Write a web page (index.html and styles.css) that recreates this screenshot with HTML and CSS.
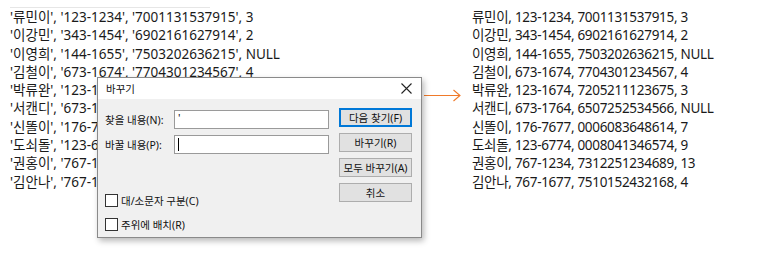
FILE: index.html
```html
<!DOCTYPE html>
<html lang="ko">
<head>
<meta charset="utf-8">
<link rel="stylesheet" href="styles.css">
</head>
<body>
<div class="page">
  <div class="left">
    <div class="rule"></div>
    <div class="lines">
      <div>'류민이', '123-1234', '7001131537915', 3</div>
      <div>'이강민', '343-1454', '6902161627914', 2</div>
      <div>'이영희', '144-1655', '7503202636215', NULL</div>
      <div>'김철이', '673-1674', '7704301234567', 4</div>
      <div>'박류완', '123-1674', '7205211123675', 3</div>
      <div>'서캔디', '673-1764', '6507252534566', NULL</div>
      <div>'신똘이', '176-7677', '0006083648614', 7</div>
      <div>'도쇠돌', '123-6774', '0008041346574', 9</div>
      <div>'권홍이', '767-1234', '7312251234689', 13</div>
      <div>'김안나', '767-1677', '7510152432168', 4</div>
    </div>
  </div>
  <div class="right lines">
    <div>류민이, 123-1234, 7001131537915, 3</div>
    <div>이강민, 343-1454, 6902161627914, 2</div>
    <div>이영희, 144-1655, 7503202636215, NULL</div>
    <div>김철이, 673-1674, 7704301234567, 4</div>
    <div>박류완, 123-1674, 7205211123675, 3</div>
    <div>서캔디, 673-1764, 6507252534566, NULL</div>
    <div>신똘이, 176-7677, 0006083648614, 7</div>
    <div>도쇠돌, 123-6774, 0008041346574, 9</div>
    <div>권홍이, 767-1234, 7312251234689, 13</div>
    <div>김안나, 767-1677, 7510152432168, 4</div>
  </div>

  <svg class="arrow" width="40" height="14" viewBox="0 0 40 14">
    <path d="M0 7.5 H36 M29.5 2 L36 7.5 L29.5 13" fill="none" stroke="#f07a2a" stroke-width="1.1"/>
  </svg>

  <div class="dialog">
    <div class="titlebar">
      <span class="title">바꾸기</span>
      <svg class="close" width="11" height="11" viewBox="0 0 11 11">
        <path d="M0.5 0.5 L10.5 10.5 M10.5 0.5 L0.5 10.5" stroke="#222" stroke-width="1.1"/>
      </svg>
    </div>
    <div class="body">
      <div class="fields">
        <div class="field">
          <label class="lbl">찾을 내용(N):</label>
          <div class="input"><span class="val">'</span></div>
        </div>
        <div class="field">
          <label class="lbl">바꿀 내용(P):</label>
          <div class="input"><span class="caret"></span></div>
        </div>
        <div class="checks">
          <div class="check"><span class="box"></span>대/소문자 구분(C)</div>
          <div class="check"><span class="box"></span>주위에 배치(R)</div>
        </div>
      </div>
      <div class="buttons">
        <div class="btn default">다음 찾기(F)</div>
        <div class="btn">바꾸기(R)</div>
        <div class="btn">모두 바꾸기(A)</div>
        <div class="btn">취소</div>
      </div>
    </div>
  </div>
</div>
</body>
</html>
```

FILE: styles.css
```css
html, body {
  margin: 0;
  padding: 0;
  background: #fff;
}
.page {
  position: relative;
  width: 761px;
  height: 255px;
  display: flex;
  font-family: "Noto Sans", "Noto Sans CJK KR", sans-serif;
  color: #1a1a1a;
  overflow: hidden;
}
.left {
  width: 461px;
  padding-left: 10px;
  box-sizing: border-box;
}
.rule {
  width: 200px;
  height: 1px;
  background: #e6e6e6;
  margin-top: 7px;
}
.lines {
  font-size: 13.5px;
  line-height: 18.3px;
  white-space: nowrap;
}
.right {
  padding-top: 8px;
  padding-left: 11px;
  letter-spacing: -0.3px;
}
.arrow {
  position: absolute;
  left: 424px;
  top: 88px;
}
.dialog {
  position: absolute;
  left: 97px;
  top: 77px;
  width: 323px;
  height: 159px;
  border: 1px solid #8a8a8a;
  background: #f0f0f0;
  box-shadow: 2px 3px 6px rgba(0,0,0,0.28);
  font-size: 10.5px;
  color: #111;
  display: flex;
  flex-direction: column;
}
.titlebar {
  height: 21px;
  background: #fff;
  display: flex;
  align-items: center;
  justify-content: space-between;
  padding: 0 9px 0 8px;
  flex: none;
}
.title {
  font-size: 10.5px;
}
.body {
  display: flex;
  padding: 8px 9px 0 7px;
  gap: 10px;
}
.fields {
  flex: 1;
  display: flex;
  flex-direction: column;
}
.field {
  display: flex;
  align-items: center;
  height: 19px;
  margin-top: 3px;
  margin-bottom: 3px;
}
.lbl {
  width: 69px;
  flex: none;
}
.input {
  width: 150px;
  height: 17px;
  border: 1px solid #9a9a9a;
  background: #fff;
  display: flex;
  align-items: center;
  padding-left: 3px;
}
.val {
  font-size: 11px;
  line-height: 1;
  margin-top: -4px;
}
.caret {
  width: 1px;
  height: 13px;
  background: #000;
}
.checks {
  margin-top: 37px;
  display: flex;
  flex-direction: column;
  gap: 11px;
}
.check {
  display: flex;
  align-items: center;
  height: 13px;
}
.box {
  width: 11px;
  height: 11px;
  border: 1px solid #333;
  background: #fff;
  margin-right: 3px;
  flex: none;
}
.buttons {
  width: 74px;
  display: flex;
  flex-direction: column;
  gap: 6px;
  margin-top: 1px;
}
.btn {
  height: 17px;
  border: 1px solid #adadad;
  background: #e1e1e1;
  display: flex;
  align-items: center;
  justify-content: center;
}
.btn.default {
  border: 2px solid #0078d7;
  height: 15px;
}
```
